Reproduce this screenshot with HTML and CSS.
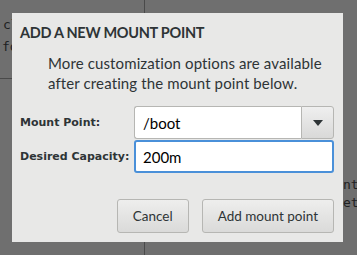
FILE: index.html
```html
<!DOCTYPE html>
<html>
<head>
    <title>Add a New Mount Point</title>
    <link rel="stylesheet" href="styles.css">
</head>
<body>
    <!-- window underneath the dialog -->
    <div class="backdrop">
        <span class="bg-line bg-vline"></span>
        <span class="bg-line bg-hline"></span>
        <span class="bg-text bg-left1">cl</span>
        <span class="bg-text bg-left2">fo</span>
        <span class="bg-text bg-right1">nts</span>
        <span class="bg-text bg-right2">eta</span>
    </div>

    <div class="dialog">
        <h2 class="title">ADD A NEW MOUNT POINT</h2>
        <p class="intro">More customization options are available<br>after creating the mount point below.</p>

        <div class="form">
            <label class="form-label" for="mountpoint">Mount Point:</label>
            <div class="combo">
                <input type="text" id="mountpoint" class="combo-entry" value="/boot">
                <button class="combo-button" tabindex="-1">
                    <svg width="10" height="6" viewBox="0 0 10 6"><path d="M0 0h10L5 6z" fill="#2e3436"/></svg>
                </button>
            </div>

            <label class="form-label" for="capacity">Desired Capacity:</label>
            <input type="text" id="capacity" class="entry focused" value="200m">
        </div>

        <div class="actions">
            <button class="btn">Cancel</button>
            <button class="btn">Add mount point</button>
        </div>
    </div>
</body>
</html>
```

FILE: styles.css
```css
html, body {
    margin: 0;
    height: 100%;
}
body {
    background-color: #6f6f6f;
    position: relative;
    overflow: hidden;
    padding-top: 13px;
    box-sizing: border-box;
}
.backdrop {
    position: absolute;
    inset: 0;
    overflow: hidden;
}
.bg-line {
    position: absolute;
    background-color: #4a4a4a;
}
.bg-vline {
    left: 144px;
    top: 0;
    width: 1px;
    height: 100%;
}
.bg-hline {
    left: 0;
    top: 78px;
    width: 20px;
    height: 1px;
}
.bg-text {
    position: absolute;
    font-family: "DejaVu Sans Mono", monospace;
    font-size: 13px;
    color: #1e2122;
    line-height: 16px;
    white-space: nowrap;
}
.bg-left1 { left: 3px; top: 17px; }
.bg-left2 { left: 2px; top: 39px; }
.bg-right1 { left: 343px; top: 177px; }
.bg-right2 { left: 343px; top: 195px; }

.dialog {
    position: relative;
    margin-left: 12px;
    width: 331px;
    height: 229px;
    box-sizing: border-box;
    background-color: #e8e8e7;
    color: #2e3436;
    font-family: "Lato", sans-serif;
    padding: 10px 9px 0 8px;
    display: flex;
    flex-direction: column;
}
.title {
    margin: 0;
    font-size: 14.5px;
    font-weight: bold;
    letter-spacing: -0.3px;
    line-height: 20px;
}
.intro {
    margin: 10px 0 0 28px;
    font-size: 15px;
    letter-spacing: 0.12px;
    line-height: 20px;
    white-space: nowrap;
}
.form {
    margin-top: 13px;
    display: grid;
    grid-template-columns: 114px 200px;
    row-gap: 1px;
    align-items: center;
}
.form-label {
    font-family: "DejaVu Sans", sans-serif;
    font-weight: bold;
    font-size: 11px;
    white-space: nowrap;
}
.combo {
    display: flex;
    height: 33px;
}
.combo-entry, .entry {
    font-family: "Lato", sans-serif;
    font-size: 15px;
    color: #000;
    background: #fff;
    border: 1px solid #b6b6b3;
    padding: 0 8px;
    outline: none;
    box-sizing: border-box;
    height: 33px;
}
.combo-entry {
    flex: 1;
    min-width: 0;
    border-right: none;
    border-radius: 3px 0 0 3px;
}
.combo-button {
    width: 33px;
    height: 33px;
    border: 1px solid #b6b6b3;
    border-radius: 0 3px 3px 0;
    background: linear-gradient(#efefef, #d9d9d8);
    display: flex;
    align-items: center;
    justify-content: center;
    padding: 0;
}
.entry.focused {
    width: 200px;
    border: 2px solid #4a90d9;
    border-radius: 3px;
    padding: 0 7px;
}
.actions {
    margin-top: auto;
    margin-bottom: 9px;
    display: flex;
    justify-content: flex-end;
    gap: 13px;
}
.btn {
    height: 34px;
    padding: 0 15px;
    font-family: "Lato", sans-serif;
    font-size: 13.5px;
    color: #2e3436;
    border: 1px solid #b6b6b3;
    border-radius: 3px;
    background: linear-gradient(#eeeeed, #dadad9);
}
```
